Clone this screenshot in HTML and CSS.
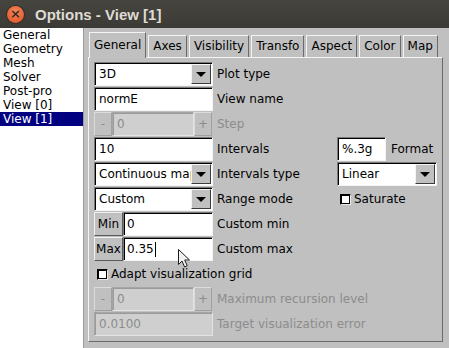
FILE: index.html
```html
<!DOCTYPE html>
<html lang="en">
<head>
  <meta charset="UTF-8">
  <title>Options - View [1]</title>
  <link rel="stylesheet" href="styles.css">
</head>
<body>

  <header class="titlebar">
    <span class="close">&times;</span>
    <span class="title">Options - View [1]</span>
  </header>

  <div class="main">
    <ul class="browser">
      <li>General</li>
      <li>Geometry</li>
      <li>Mesh</li>
      <li>Solver</li>
      <li>Post-pro</li>
      <li>View [0]</li>
      <li class="selected">View [1]</li>
    </ul>

    <div class="tabs">
      <div class="tab-row">
        <span class="tab active">General</span>
        <span class="tab">Axes</span>
        <span class="tab">Visibility</span>
        <span class="tab">Transfo</span>
        <span class="tab">Aspect</span>
        <span class="tab">Color</span>
        <span class="tab">Map</span>
      </div>

      <div class="panel">
        <div class="row">
          <div class="choice"><span class="choice-text">3D</span><span class="drop"></span></div>
          <span class="label">Plot type</span>
        </div>

        <div class="row">
          <div class="input wide">normE</div>
          <span class="label">View name</span>
        </div>

        <div class="row off">
          <div class="spin">
            <span class="btn small">-</span>
            <div class="input">0</div>
            <span class="btn small">+</span>
          </div>
          <span class="label">Step</span>
        </div>

        <div class="row">
          <div class="input wide">10</div>
          <span class="label">Intervals</span>
          <div class="input format">%.3g</div>
          <span class="label short">Format</span>
        </div>

        <div class="row">
          <div class="choice"><span class="choice-text">Continuous map</span><span class="drop"></span></div>
          <span class="label">Intervals type</span>
          <div class="choice narrow"><span class="choice-text">Linear</span><span class="drop"></span></div>
        </div>

        <div class="row">
          <div class="choice"><span class="choice-text">Custom</span><span class="drop"></span></div>
          <span class="label">Range mode</span>
          <label class="checkrow second"><span class="check"></span>Saturate</label>
        </div>

        <div class="row">
          <div class="pair">
            <span class="btn minmax">Min</span>
            <div class="input">0</div>
          </div>
          <span class="label">Custom min</span>
        </div>

        <div class="row">
          <div class="pair">
            <span class="btn minmax">Max</span>
            <div class="input">0.35<span class="caret"></span></div>
          </div>
          <span class="label">Custom max</span>
        </div>

        <div class="row">
          <label class="checkrow"><span class="check"></span>Adapt visualization grid</label>
        </div>

        <div class="row off">
          <div class="spin">
            <span class="btn small">-</span>
            <div class="input">0</div>
            <span class="btn small">+</span>
          </div>
          <span class="label">Maximum recursion level</span>
        </div>

        <div class="row off">
          <div class="input wide">0.0100</div>
          <span class="label">Target visualization error</span>
        </div>
      </div>
    </div>
  </div>

  <!-- mouse pointer over the Max field -->
  <svg class="pointer" width="14" height="21" viewBox="0 0 14 21">
    <path d="M1.5 1.5 L1.5 16.5 L5 13 L7.6 19 L10.2 17.8 L7.7 12 L12.5 12 Z" fill="#f2f2f2" stroke="#1c1c1c" stroke-width="1" stroke-linejoin="round"/>
  </svg>

</body>
</html>
```

FILE: styles.css
```css
* {
  box-sizing: border-box;
}

body {
  margin: 0;
  width: 449px;
  height: 348px;
  overflow: hidden;
  position: relative;
  background-color: #c0c0c0;
  font-family: 'DejaVu Sans', sans-serif;
  font-size: 12px;
  color: #000;
}

.titlebar {
  height: 28px;
  display: flex;
  align-items: center;
  padding-left: 7px;
  background: linear-gradient(#46453f, #3b3a36);
}

.close {
  width: 17px;
  height: 17px;
  border-radius: 50%;
  background: radial-gradient(circle at 50% 35%, #f4865c, #df4f1f);
  box-shadow: 0 0 0 1px #2f2e2a;
  color: #3b2a24;
  font-size: 13px;
  font-weight: bold;
  line-height: 16px;
  text-align: center;
}

.title {
  margin-left: 11px;
  font-family: 'Liberation Sans', sans-serif;
  font-weight: bold;
  font-size: 15px;
  color: #dfdbd2;
}

.main {
  display: flex;
  height: 320px;
}

.browser {
  width: 84px;
  margin: 0;
  padding: 0;
  list-style: none;
  background-color: #fff;
  border-right: 1px solid #9a9a9a;
}

.browser li {
  height: 14px;
  line-height: 14px;
  padding-left: 3px;
  white-space: nowrap;
}

.browser .selected {
  background-color: #000080;
  color: #fff;
}

.tabs {
  margin-left: 4px;
  padding-top: 3px;
  width: 355px;
}

.tab-row {
  display: flex;
  align-items: flex-end;
  height: 26px;
  gap: 2px;
  padding-left: 1px;
}

.tab {
  height: 22px;
  line-height: 21px;
  padding: 0 4px;
  border: 1px solid;
  border-bottom: none;
  border-color: #f4f4f4 #6b6b6b transparent #f4f4f4;
  white-space: nowrap;
}

.tab.active {
  position: relative;
  height: 26px;
  margin-bottom: -1px;
  line-height: 24px;
  background-color: #c0c0c0;
}

.panel {
  height: 285px;
  padding: 4px 5px;
  border: 1px solid;
  border-color: #f4f4f4 #6b6b6b #6b6b6b #f4f4f4;
}

.row {
  display: flex;
  align-items: center;
  height: 24px;
  margin-bottom: 1px;
}

.label {
  width: 124px;
  padding-left: 4px;
  line-height: 24px;
  white-space: nowrap;
}

.label.short {
  width: auto;
  padding-left: 5px;
}

.off .label {
  color: #8c8c8c;
}

.input {
  height: 24px;
  padding-left: 4px;
  line-height: 22px;
  white-space: nowrap;
  overflow: hidden;
  background-color: #fff;
  border: 1px solid;
  border-color: #7a7a7a #f4f4f4 #f4f4f4 #7a7a7a;
  box-shadow: inset 1px 1px 0 #000;
}

.wide {
  width: 119px;
}

.format {
  width: 49px;
}

.off .input {
  background-color: #cfcfcf;
  color: #8c8c8c;
  border-color: #a6a6a6 #e4e4e4 #e4e4e4 #a6a6a6;
  box-shadow: inset 1px 1px 0 #9a9a9a;
}

.choice {
  display: flex;
  width: 119px;
  height: 24px;
  padding: 1px 1px 1px 0;
  background-color: #fff;
  border: 1px solid;
  border-color: #7a7a7a #f4f4f4 #f4f4f4 #7a7a7a;
  box-shadow: inset 1px 1px 0 #000;
}

.choice.narrow {
  width: 100px;
}

.choice-text {
  flex: 1;
  padding-left: 4px;
  line-height: 20px;
  white-space: nowrap;
  overflow: hidden;
}

.drop {
  width: 20px;
  display: flex;
  align-items: center;
  justify-content: center;
  background-color: #c0c0c0;
  border: 1px solid;
  border-color: #f4f4f4 #3c3c3c #3c3c3c #f4f4f4;
}

.drop::after {
  content: '';
  border-left: 5px solid transparent;
  border-right: 5px solid transparent;
  border-top: 5px solid #000;
}

.btn {
  height: 24px;
  text-align: center;
  line-height: 22px;
  background-color: #c0c0c0;
  border: 1px solid;
  border-color: #f0f0f0 #5a5a5a #5a5a5a #f0f0f0;
}

.off .btn {
  color: #8c8c8c;
  border-color: #dcdcdc #a0a0a0 #a0a0a0 #dcdcdc;
}

.spin,
.pair {
  display: flex;
  width: 119px;
}

.spin .input {
  width: 82px;
}

.small {
  width: 18px;
}

.minmax {
  width: 29px;
}

.pair .input {
  width: 90px;
  padding-left: 3px;
}

.caret {
  display: inline-block;
  width: 1px;
  height: 15px;
  margin-left: 1px;
  vertical-align: middle;
  background-color: #000;
}

.checkrow {
  display: flex;
  align-items: center;
  padding-left: 3px;
  white-space: nowrap;
}

.checkrow.second {
  padding-left: 3px;
}

.check {
  width: 11px;
  height: 11px;
  margin-right: 3px;
  background-color: #fff;
  border: 1px solid;
  border-color: #000 #eaeaea #eaeaea #000;
  box-shadow: inset 1px 1px 0 #000, inset -1px -1px 0 #000;
}

.pointer {
  position: absolute;
  left: 177px;
  top: 248px;
}
```
